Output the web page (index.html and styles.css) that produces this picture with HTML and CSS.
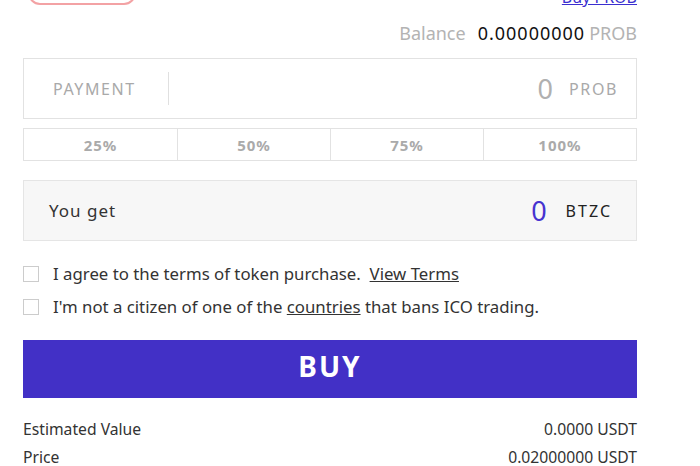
FILE: index.html
```
<html lang="en">

<head>
    <meta charset="UTF-8" />
    <meta name="viewport" content="width=device-width, initial-scale=1.0" />
    <title>Buy BTZC</title>
    <link rel="stylesheet" href="styles.css">
</head>

<body>
    <div class="wrap">
        <div class="top-row">
            <button class="pink-btn">&nbsp;</button>
            <a href="#" class="buy-link">Buy PROB</a>
        </div>

        <div class="balance">
            <span class="label">Balance</span>
            <span class="amount">0.00000000</span>
            <span class="unit">PROB</span>
        </div>

        <div class="payment">
            <span class="pay-label">PAYMENT</span>
            <span class="divider"></span>
            <span class="pay-value">0</span>
            <span class="pay-unit">PROB</span>
        </div>

        <div class="percents">
            <button>25%</button>
            <button>50%</button>
            <button>75%</button>
            <button>100%</button>
        </div>

        <div class="you-get">
            <span class="get-label">You get</span>
            <span class="get-value">0</span>
            <span class="get-unit">BTZC</span>
        </div>

        <label class="check first">
            <span class="box"></span>
            I agree to the terms of token purchase.&nbsp;&nbsp;<a href="#">View Terms</a>
        </label>
        <label class="check">
            <span class="box"></span>
            I'm not a citizen of one of the&nbsp;<a href="#">countries</a>&nbsp;that bans ICO trading.
        </label>

        <button class="buy">BUY</button>

        <div class="info">
            <span>Estimated Value</span>
            <span>0.0000 USDT</span>
        </div>
        <div class="info">
            <span>Price</span>
            <span>0.02000000 USDT</span>
        </div>
    </div>
</body>

</html>
```

FILE: styles.css
```
body {
    margin: 0;
    background-color: #ffffff;
    font-family: "Noto Sans", "Noto Sans CJK KR", sans-serif;
    color: #333333;
}

.wrap {
    width: 614px;
    margin-left: 23px;
}

.top-row {
    display: flex;
    justify-content: space-between;
    align-items: flex-end;
    height: 36px;
    margin-top: -31px;
}

.pink-btn {
    width: 108px;
    height: 34px;
    margin-left: 5px;
    border: 2px solid #f3a2a4;
    border-radius: 12px;
    background-color: #ffffff;
}

.buy-link {
    color: #3b2fd0;
    font-size: 16px;
    line-height: 20px;
    margin-bottom: -2px;
}

.balance {
    display: flex;
    justify-content: flex-end;
    align-items: baseline;
    margin-top: 16px;
    font-size: 18px;
    line-height: 24px;
}

.balance .label {
    color: #b3b3b3;
    margin-right: 12px;
}

.balance .amount {
    color: #111111;
    letter-spacing: 1px;
    margin-right: 4px;
}

.balance .unit {
    color: #b3b3b3;
}

.payment {
    display: flex;
    align-items: center;
    height: 59px;
    margin-top: 13px;
    border: 1px solid #e2e2e2;
    padding: 0 18px 0 29px;
}

.pay-label {
    color: #a9a9a9;
    font-size: 16px;
    letter-spacing: 1.6px;
}

.divider {
    width: 1px;
    height: 33px;
    background-color: #e0e0e0;
    margin-left: 32px;
    flex: none;
}

.pay-value {
    margin-left: auto;
    color: #b0b0b0;
    font-size: 27px;
}

.pay-unit {
    margin-left: 16px;
    color: #a9a9a9;
    font-size: 16px;
    letter-spacing: 1.6px;
}

.percents {
    display: grid;
    grid-template-columns: repeat(4, 1fr);
    margin-top: 9px;
    border: 1px solid #e2e2e2;
}

.percents button {
    height: 31px;
    border: 0;
    border-left: 1px solid #e2e2e2;
    background-color: #ffffff;
    color: #aaaaaa;
    font-family: "Noto Sans", sans-serif;
    font-size: 15px;
    font-weight: bold;
    letter-spacing: 1px;
}

.percents button:first-child {
    border-left: 0;
}

.you-get {
    display: flex;
    align-items: center;
    height: 59px;
    margin-top: 19px;
    background-color: #f7f7f7;
    border: 1px solid #e5e5e5;
    padding: 0 24px 0 25px;
}

.get-label {
    font-size: 17px;
    letter-spacing: 1px;
    color: #333333;
}

.get-value {
    margin-left: auto;
    color: #4633d0;
    font-size: 27px;
}

.get-unit {
    margin-left: 19px;
    font-size: 16px;
    letter-spacing: 2px;
    color: #222222;
}

.check {
    display: flex;
    align-items: center;
    margin-top: 11px;
    font-size: 16.8px;
    line-height: 22px;
    color: #333333;
}

.check.first {
    margin-top: 22px;
}

.check .box {
    width: 14px;
    height: 14px;
    border: 1px solid #cccccc;
    margin-right: 14px;
    flex: none;
}

.check a {
    color: #333333;
}

.buy {
    display: block;
    width: 100%;
    height: 58px;
    margin-top: 22px;
    padding: 0 0 6px;
    border: 0;
    background-color: #4230c6;
    color: #ffffff;
    font-family: "Noto Sans", sans-serif;
    font-size: 28px;
    font-weight: bold;
    letter-spacing: 2px;
}

.info {
    display: flex;
    justify-content: space-between;
    font-size: 15.7px;
    line-height: 28px;
    color: #333333;
}

.buy + .info {
    margin-top: 17px;
}
```
